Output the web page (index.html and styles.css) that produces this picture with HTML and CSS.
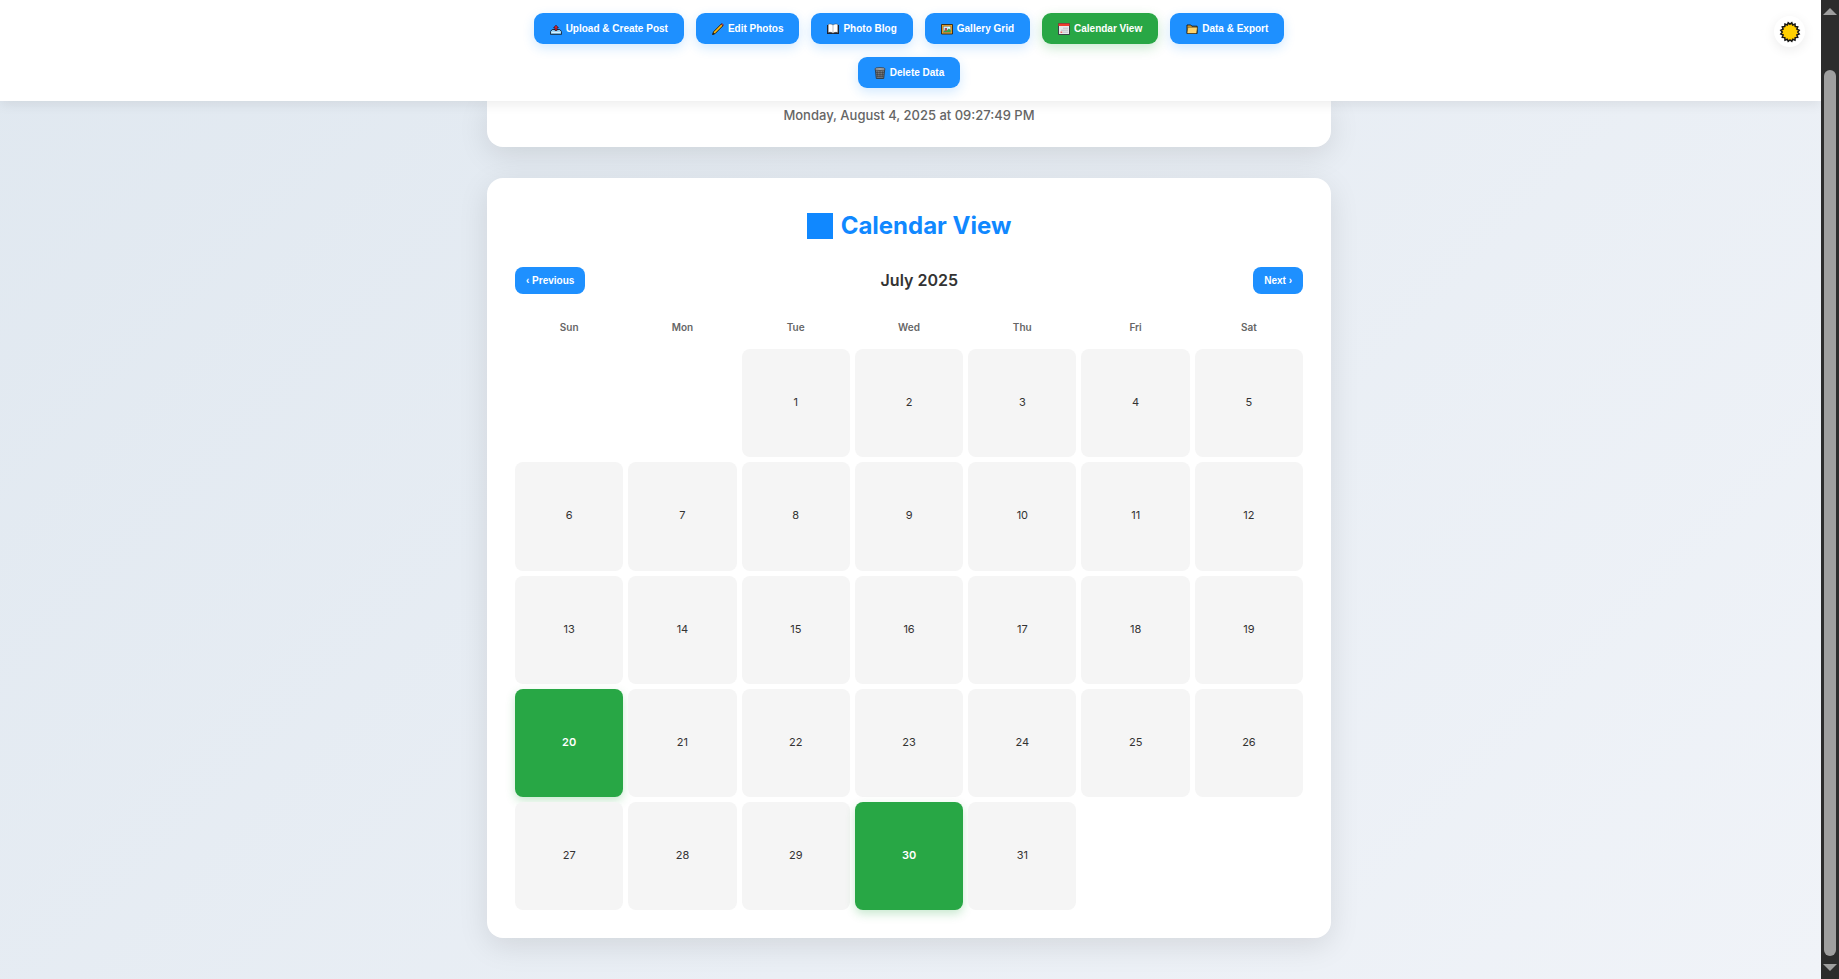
FILE: index.html
```html
<!DOCTYPE html>
<html lang="en">
<head>
<meta charset="utf-8">
<title>Calendar View</title>
<link rel="stylesheet" href="styles.css">
</head>
<body>
<div class="window">
  <div class="page">
    <header class="topbar">
      <nav class="tabs">
        <button class="tab" type="button">
          <svg class="icon" viewBox="0 0 12 12" aria-hidden="true"><path d="M2.3 6.500h7.4l1.900 2v2.800H.4V8.500z" fill="#8fd0f5" stroke="#111c2b" stroke-width=".9"/><path d="M1.500 9.400h9" stroke="#d9f1ff" stroke-width="1.200"/><path d="M6 2.200l2.400 2.600H7v2.700H5V4.800H3.600z" fill="#e3202f" stroke="#301018" stroke-width=".7"/></svg>
          Upload &amp; Create Post</button>
        <button class="tab" type="button">
          <svg class="icon" viewBox="0 0 12 12" aria-hidden="true"><path d="M.6 11.500l.9-2.700L9.300 1l1.700 1.700-7.800 7.800z" fill="#fdb813" stroke="#1a1408" stroke-width=".9"/><path d="M9.300 1l.8-.6 1.500 1.500-.6.800z" fill="#f0444f" stroke="#40151a" stroke-width=".4"/><path d="M.6 11.500l.5-1.700 1.200 1.200z" fill="#111"/></svg>
          Edit Photos</button>
        <button class="tab" type="button">
          <svg class="icon" viewBox="0 0 12 12" aria-hidden="true"><path d="M0 2h12v9H0z" fill="#1c2230"/><path d="M1.200 1.500C3 .8 4.800 1 6 2c1.200-1 3-1.200 4.800-.5V9.700C9 9 7.200 9.200 6 10.200 4.800 9.200 3 9 1.200 9.700z" fill="#fff" stroke="#333" stroke-width=".4"/><path d="M6 2v8" stroke="#999" stroke-width=".6"/></svg>
          Photo Blog</button>
        <button class="tab" type="button">
          <svg class="icon" viewBox="0 0 12 12" aria-hidden="true"><path d="M.5 1.500h11v9.500H.5z" fill="#f3a92b" stroke="#33240c" stroke-width=".9"/><path d="M2.200 3.200h7.600v6.100H2.200z" fill="#c9ecff" stroke="#5d451c" stroke-width=".5"/><path d="M2.400 9l2-3 1.500 1.500 1.800-2 2 1.500v2z" fill="#38a34a"/><path d="M3.800 5h2.200v3H3.800z" fill="#b64c52"/><circle cx="8" cy="4.600" r=".8" fill="#fff"/></svg>
          Gallery Grid</button>
        <button class="tab tab-active" type="button">
          <svg class="icon" viewBox="0 0 12 12" aria-hidden="true"><path d="M.5.500h11v11H.5z" fill="#e9e9eb" stroke="#33333b" stroke-width=".9"/><path d="M.5.500h11v2.500H.5z" fill="#ef3b2d"/><path d="M5 5.200h5M3 7.200h7M5 9.200h5" stroke="#b8b8c0" stroke-width=".8"/><path d="M2.500 8.500h1.800v1.500H2.500z" fill="#ec6464"/></svg>
          Calendar View</button>
        <button class="tab" type="button">
          <svg class="icon" viewBox="0 0 12 12" aria-hidden="true"><path d="M1 10.500V2h3.800l1 1.200h5.300v7.300z" fill="#e5a834" stroke="#151515" stroke-width=".9"/><path d="M1 10.500L1.800 4.200h9.700l-1 6.300z" fill="#ffd36b" stroke="#251d0c" stroke-width=".5"/></svg>
          Data &amp; Export</button>
        <button class="tab" type="button">
          <svg class="icon" viewBox="0 0 12 12" aria-hidden="true"><path d="M1.300 2.500h9.400l-1 9H2.300z" fill="#777b80" stroke="#2b2e32" stroke-width=".8"/><path d="M3.200 4l.7 6.500M6 4v6.500M8.800 4l-.7 6.500M2 5.500h8M2.200 7.500h7.600M2.500 9.400h7" stroke="#34373b" stroke-width=".5"/><ellipse cx="6" cy="2" rx="5.200" ry="1.500" fill="#a0a3a7" stroke="#33363a" stroke-width=".7"/></svg>
          Delete Data</button>
      </nav>
      <button class="theme" type="button" aria-label="Toggle theme">
        <svg class="sun" viewBox="0 0 22 22" aria-hidden="true"><path d="M11 3.200l1.800-1.400.9 2.200 2.300-.9.200 2.500 2.500.200-.8 2.400 2.300 1-1.400 1.900 1.400 1.900-2.300 1 .8 2.400-2.500.2-.2 2.500-2.300-.9-.9 2.200L11 19l-1.800 1.400-.9-2.200-2.300.9-.2-2.500-2.500-.2.800-2.400-2.300-1 1.400-1.900-1.400-1.900 2.300-1-.8-2.400 2.500-.2.200-2.500 2.300.9.900-2.200z" fill="#ffc800" stroke="#161616" stroke-width="1.500"/><circle cx="11" cy="11.100" r="6.500" fill="#ffd000"/></svg>
      </button>
    </header>
    <main class="content">
      <section class="card card-intro">
        <p class="date">Monday, August 4, 2025 at 09:27:49 PM</p>
      </section>
      <section class="card card-calendar">
        <h2 class="title"><span class="title-mark"></span>Calendar View</h2>
        <div class="month-bar">
          <button class="step" type="button">‹ Previous</button>
          <h3 class="month">July 2025</h3>
          <button class="step" type="button">Next ›</button>
        </div>
        <div class="weekdays">
          <span>Sun</span><span>Mon</span><span>Tue</span><span>Wed</span><span>Thu</span><span>Fri</span><span>Sat</span>
        </div>
        <div class="days">
          <div></div><div></div>
          <div class="day">1</div><div class="day">2</div><div class="day">3</div><div class="day">4</div><div class="day">5</div>
          <div class="day">6</div><div class="day">7</div><div class="day">8</div><div class="day">9</div><div class="day">10</div><div class="day">11</div><div class="day">12</div>
          <div class="day">13</div><div class="day">14</div><div class="day">15</div><div class="day">16</div><div class="day">17</div><div class="day">18</div><div class="day">19</div>
          <div class="day day-post">20</div><div class="day">21</div><div class="day">22</div><div class="day">23</div><div class="day">24</div><div class="day">25</div><div class="day">26</div>
          <div class="day">27</div><div class="day">28</div><div class="day">29</div><div class="day day-post">30</div><div class="day">31</div>
        </div>
      </section>
    </main>
  </div>
  <div class="scrollbar" aria-hidden="true">
    <svg class="arrow" viewBox="0 0 14 7"><path d="M7 0l7 7H0z" fill="#9f9f9f"/></svg>
    <div class="track"><div class="thumb"></div></div>
    <svg class="arrow" viewBox="0 0 14 7"><path d="M0 0h14L7 7z" fill="#9f9f9f"/></svg>
  </div>
</div>
</body>
</html>
```
FILE: styles.css
```css
* {
  box-sizing: border-box;
}

body {
  margin: 0;
  font-family: Inter, "Liberation Sans", sans-serif;
  color: #333;
}

h2, h3, p {
  margin: 0;
}

button {
  border: 0;
  cursor: pointer;
  font-family: "Liberation Sans", Arial, sans-serif;
  font-weight: 700;
  color: #fff;
}

.window {
  display: flex;
  height: 100vh;
  overflow: hidden;
}

.page {
  flex: 1;
  min-width: 0;
  overflow: hidden;
  background: linear-gradient(135deg, #e0e8f0, #f0f3f8);
}

.topbar {
  position: relative;
  z-index: 2;
  padding: 13px 19px 13px 16px;
  background: #fff;
  box-shadow: 0 3px 12px rgba(0, 0, 0, 0.08);
}

.tabs {
  display: flex;
  flex-wrap: wrap;
  justify-content: center;
  gap: 13px 12px;
  max-width: 844px;
  margin: 0 auto;
}

.tab {
  display: flex;
  align-items: center;
  gap: 4px;
  height: 31px;
  padding: 0 16px;
  border-radius: 9px;
  background: #1e90ff;
  box-shadow: 0 4px 12px rgba(30, 144, 255, 0.2);
  font-size: 10px;
  white-space: nowrap;
}

.tab-active {
  background: #28a745;
  box-shadow: 0 4px 12px rgba(40, 167, 69, 0.25);
}

.icon {
  width: 12px;
  height: 12px;
}

.theme {
  position: absolute;
  top: 16px;
  right: 16px;
  display: flex;
  align-items: center;
  justify-content: center;
  width: 31px;
  height: 31px;
  padding: 0;
  border-radius: 50%;
  background: #fff;
  box-shadow: 0 3px 12px rgba(0, 0, 0, 0.08);
}

.sun {
  width: 22px;
  height: 22px;
}

.content {
  display: flex;
  flex-direction: column;
  gap: 31px;
  max-width: 847px;
  margin: 0 auto;
  padding-right: 3px;
}

.card {
  padding: 28px;
  border-radius: 16px;
  background: #fff;
  box-shadow: 0 8px 30px rgba(0, 0, 0, 0.1);
}

.card-intro {
  padding-top: 5px;
  padding-bottom: 23px;
  border-radius: 0 0 16px 16px;
}

.date {
  font-size: 13px;
  line-height: 18px;
  font-weight: 500;
  text-align: center;
  color: #666;
}

.title {
  display: flex;
  align-items: center;
  justify-content: center;
  gap: 8px;
  margin-bottom: 21px;
  font-size: 24px;
  line-height: 40px;
  font-weight: 700;
  color: #1088ff;
}

.title-mark {
  width: 26px;
  height: 26px;
  background: #1088ff;
}

.month-bar {
  display: flex;
  align-items: center;
  justify-content: space-between;
  margin-bottom: 23px;
}

.step {
  height: 27px;
  padding: 0 11px;
  border-radius: 8px;
  background: #1e90ff;
  font-size: 10px;
}

.month {
  font-size: 16px;
  line-height: 25px;
  font-weight: 600;
}

.weekdays,
.days {
  display: grid;
  grid-template-columns: repeat(7, 1fr);
  gap: 5px;
}

.weekdays {
  margin-bottom: 12px;
  font-size: 10px;
  line-height: 20px;
  font-weight: 600;
  text-align: center;
  color: #666;
}

.day {
  display: flex;
  align-items: center;
  justify-content: center;
  aspect-ratio: 1;
  padding-bottom: 2px;
  border-radius: 8px;
  background: #f5f5f5;
  font-size: 11px;
}

.day-post {
  background: #28a745;
  box-shadow: 0 4px 10px rgba(40, 167, 69, 0.25);
  font-weight: 600;
  color: #fff;
}

.scrollbar {
  display: flex;
  flex-direction: column;
  align-items: center;
  gap: 8px;
  width: 18px;
  padding: 8px 0;
  background: #2c2c2c;
}

.arrow {
  width: 14px;
  height: 7px;
}

.track {
  flex: 1;
  display: flex;
  align-items: flex-end;
}

.thumb {
  width: 12px;
  height: 95%;
  border-radius: 6px;
  background: #9f9f9f;
}
```
